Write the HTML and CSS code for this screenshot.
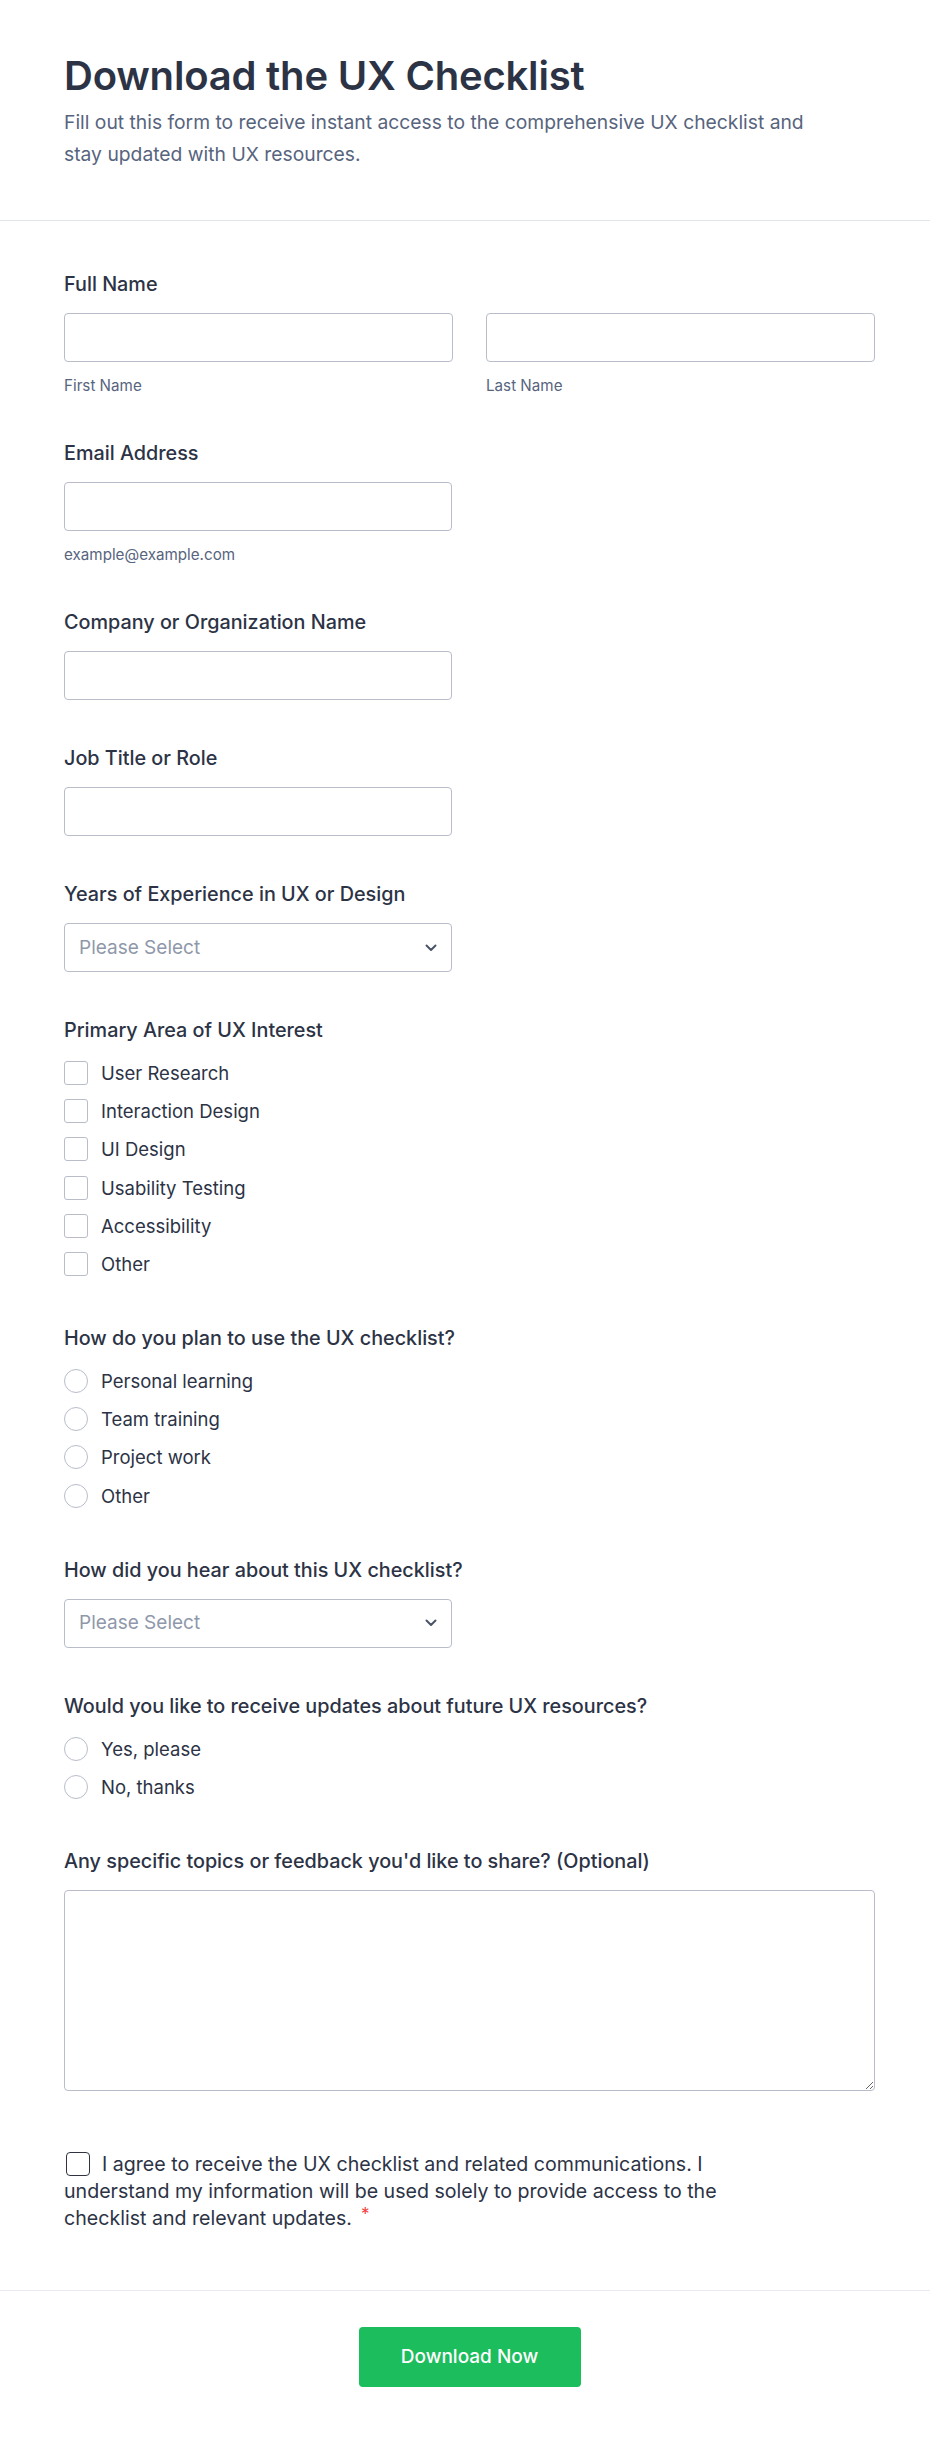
FILE: index.html
```html
<!DOCTYPE html>
<html lang="en">
<head>
<meta charset="utf-8">
<title>Download the UX Checklist</title>
<link rel="stylesheet" href="styles.css">
</head>
<body>
<div class="page">
  <header class="header">
    <h1 class="title">Download the UX Checklist</h1>
    <p class="subtitle">Fill out this form to receive instant access to the comprehensive UX checklist and stay updated with UX resources.</p>
  </header>

  <form class="form">
    <div class="field">
      <label class="label">Full Name</label>
      <div class="name-row">
        <div class="name-col">
          <input class="input" type="text">
          <span class="sublabel">First Name</span>
        </div>
        <div class="name-col">
          <input class="input" type="text">
          <span class="sublabel">Last Name</span>
        </div>
      </div>
    </div>

    <div class="field">
      <label class="label">Email Address</label>
      <input class="input input-half" type="email">
      <span class="sublabel">example@example.com</span>
    </div>

    <div class="field">
      <label class="label">Company or Organization Name</label>
      <input class="input input-half" type="text">
    </div>

    <div class="field">
      <label class="label">Job Title or Role</label>
      <input class="input input-half" type="text">
    </div>

    <div class="field">
      <label class="label">Years of Experience in UX or Design</label>
      <div class="select">
        <span class="placeholder">Please Select</span>
        <svg class="chevron" width="12" height="8" viewBox="0 0 12 8"><path d="M1.5 1.5L6 6l4.5-4.5" fill="none" stroke="#4b5568" stroke-width="2" stroke-linecap="round" stroke-linejoin="round"/></svg>
      </div>
    </div>

    <div class="field options-field">
      <label class="label">Primary Area of UX Interest</label>
      <div class="options">
        <div class="option"><span class="box"></span><span class="opt-text">User Research</span></div>
        <div class="option"><span class="box"></span><span class="opt-text">Interaction Design</span></div>
        <div class="option"><span class="box"></span><span class="opt-text">UI Design</span></div>
        <div class="option"><span class="box"></span><span class="opt-text">Usability Testing</span></div>
        <div class="option"><span class="box"></span><span class="opt-text">Accessibility</span></div>
        <div class="option"><span class="box"></span><span class="opt-text">Other</span></div>
      </div>
    </div>

    <div class="field options-field">
      <label class="label">How do you plan to use the UX checklist?</label>
      <div class="options">
        <div class="option"><span class="radio"></span><span class="opt-text">Personal learning</span></div>
        <div class="option"><span class="radio"></span><span class="opt-text">Team training</span></div>
        <div class="option"><span class="radio"></span><span class="opt-text">Project work</span></div>
        <div class="option"><span class="radio"></span><span class="opt-text">Other</span></div>
      </div>
    </div>

    <div class="field">
      <label class="label">How did you hear about this UX checklist?</label>
      <div class="select">
        <span class="placeholder">Please Select</span>
        <svg class="chevron" width="12" height="8" viewBox="0 0 12 8"><path d="M1.5 1.5L6 6l4.5-4.5" fill="none" stroke="#4b5568" stroke-width="2" stroke-linecap="round" stroke-linejoin="round"/></svg>
      </div>
    </div>

    <div class="field options-field">
      <label class="label">Would you like to receive updates about future UX resources?</label>
      <div class="options">
        <div class="option"><span class="radio"></span><span class="opt-text">Yes, please</span></div>
        <div class="option"><span class="radio"></span><span class="opt-text">No, thanks</span></div>
      </div>
    </div>

    <div class="field">
      <label class="label">Any specific topics or feedback you'd like to share? (Optional)</label>
      <textarea class="textarea"></textarea>
    </div>

    <div class="consent">
      <p class="consent-text"><span class="consent-box"></span>I agree to receive the UX checklist and related communications. I understand my information will be used solely to provide access to the checklist and relevant updates.<span class="req">*</span></p>
    </div>
  </form>

  <footer class="footer">
    <button class="submit" type="button">Download Now</button>
  </footer>
</div>
</body>
</html>
```

FILE: styles.css
```css
* {
  box-sizing: border-box;
}

html, body {
  margin: 0;
  padding: 0;
  background: #ffffff;
}

body {
  font-family: Inter, "Noto Sans", "Liberation Sans", sans-serif;
  color: #2c3345;
}

.page {
  width: 930px;
  min-height: 2438px;
  background: #ffffff;
}

.header {
  padding: 52px 55px 50px 64px;
  border-bottom: 1px solid #e3e5ec;
}

.title {
  margin: 0;
  font-size: 40px;
  line-height: 48px;
  font-weight: 600;
  color: #2c3345;
  letter-spacing: -0.2px;
}

.subtitle {
  margin: 6px 0 0 0;
  max-width: 775px;
  font-size: 19.3px;
  line-height: 32px;
  color: #57647e;
}

.form {
  padding: 51px 55px 0 64px;
}

.field {
  display: flex;
  flex-direction: column;
  align-items: flex-start;
  margin-bottom: 46px;
}

.options-field {
  padding-bottom: 4px;
}

.label {
  display: block;
  font-size: 19.8px;
  line-height: 24px;
  font-weight: 500;
  color: #2c3345;
  margin-bottom: 17px;
}

.name-row {
  display: grid;
  grid-template-columns: 1fr 1fr;
  column-gap: 33px;
  width: 100%;
}

.name-col {
  display: flex;
  flex-direction: column;
}

.input {
  display: block;
  width: 100%;
  height: 49px;
  border: 1px solid #b8bdc9;
  border-radius: 4px;
  background: #ffffff;
  font-family: inherit;
  font-size: 18px;
  padding: 0 14px;
  outline: none;
}

.input-half {
  width: 388px;
}

.sublabel {
  display: block;
  margin-top: 15px;
  font-size: 15.2px;
  line-height: 18px;
  color: #57647e;
}

.select {
  display: flex;
  align-items: center;
  justify-content: space-between;
  width: 388px;
  height: 49px;
  border: 1px solid #b8bdc9;
  border-radius: 4px;
  background: #ffffff;
  padding: 0 14px 0 14px;
}

.placeholder {
  font-size: 19px;
  line-height: 24px;
  color: #8f98aa;
}

.chevron {
  display: block;
}

.options {
  display: flex;
  flex-direction: column;
  gap: 14.2px;
  margin-top: 2px;
}

.option {
  display: flex;
  align-items: center;
  height: 24px;
}

.box {
  width: 24px;
  height: 24px;
  border: 1px solid #b8bdc9;
  border-radius: 3px;
  background: #ffffff;
  margin-right: 13px;
  flex: none;
}

.radio {
  width: 24px;
  height: 24px;
  border: 1px solid #b8bdc9;
  border-radius: 50%;
  background: #ffffff;
  margin-right: 13px;
  flex: none;
}

.opt-text {
  font-size: 18.5px;
  line-height: 24px;
  color: #2c3345;
}

.textarea {
  display: block;
  width: 100%;
  height: 201px;
  border: 1px solid #b8bdc9;
  border-radius: 4px;
  background: #ffffff;
  font-family: inherit;
  font-size: 18px;
  padding: 10px 14px;
  outline: none;
  resize: vertical;
}

.consent {
  padding: 14px 0 58px 0;
}

.consent-text {
  margin: 0;
  max-width: 700px;
  font-size: 19.6px;
  line-height: 27px;
  color: #2c3345;
}

.consent-box {
  display: inline-block;
  width: 24px;
  height: 24px;
  border: 1.5px solid #2f3440;
  border-radius: 4px;
  vertical-align: top;
  margin: 1px 12px 0 2px;
}

.req {
  display: inline-block;
  color: #f23a3c;
  font-size: 17px;
  line-height: 17px;
  vertical-align: top;
  margin-left: 9px;
  margin-top: 1px;
}

.footer {
  border-top: 1px solid #e9eaf0;
  padding: 36px 55px 50px 64px;
  text-align: center;
}

.submit {
  width: 222px;
  height: 60px;
  border: none;
  border-radius: 4px;
  background: #1bbd5c;
  color: #ffffff;
  font-family: inherit;
  font-size: 19px;
  font-weight: 500;
  cursor: pointer;
}
```
